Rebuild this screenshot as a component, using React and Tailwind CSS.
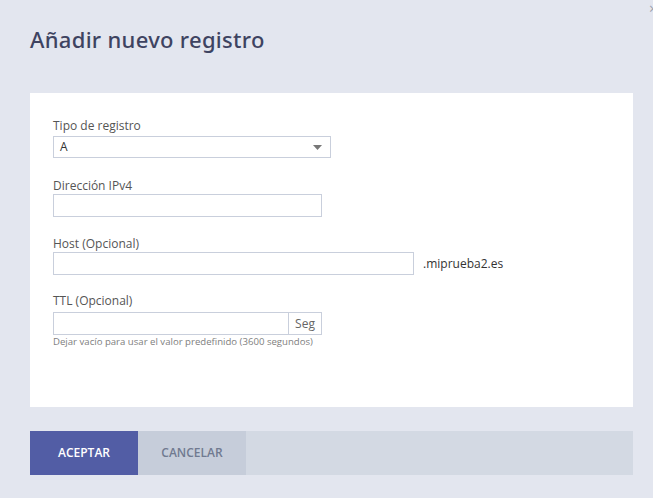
export default function App() {
  return (
    <div className="relative w-[653px] h-[498px] bg-[#e3e6ef] overflow-hidden" style={{ fontFamily: '"Open Sans", sans-serif' }}>
      <span className="absolute right-[-4px] top-[2px] text-[14px] text-[#9aa0ad] leading-none">×</span>
      <div className="pl-[30px] pt-[25px] h-[93px]">
        <h1 className="text-[22px] leading-[28px] text-[#3e4361] font-medium tracking-[0.3px]" style={{ fontFamily: '"Noto Sans", sans-serif' }}>Añadir nuevo registro</h1>
      </div>
      <div className="ml-[30px] w-[603px] h-[314px] bg-white pl-[23px] pt-[25px] text-[#555]">
        <div className="text-[12px] leading-[16px]">Tipo de registro</div>
        <div className="mt-[2px] w-[278px] h-[22px] border border-[#c9cfdc] flex items-center justify-between px-[6px] text-[12px] text-[#333]">
          <span>A</span>
          <svg width="9" height="5" viewBox="0 0 9 5" className="mr-[2px]"><path d="M0 0h9L4.5 5z" fill="#777" /></svg>
        </div>
        <div className="mt-[20px] text-[12px] leading-[16px]">Dirección IPv4</div>
        <div className="mt-0 w-[269px] h-[23px] border border-[#c9cfdc]" />
        <div className="mt-[19px] text-[12px] leading-[16px]">Host (Opcional)</div>
        <div className="mt-0 flex items-center">
          <div className="w-[361px] h-[23px] border border-[#c9cfdc]" />
          <span className="ml-[9px] text-[12px] text-[#333]">.miprueba2.es</span>
        </div>
        <div className="mt-[18px] text-[12px] leading-[16px]">TTL (Opcional)</div>
        <div className="mt-[3px] flex w-[269px] h-[23px]">
          <div className="flex-1 border border-[#c9cfdc]" />
          <div className="w-[33px] border border-l-0 border-[#c9cfdc] flex items-center justify-center text-[12px] text-[#666]">Seg</div>
        </div>
        <div className="mt-[1px] text-[9.6px] leading-[12px] text-[#808080]">Dejar vacío para usar el valor predefinido (3600 segundos)</div>
      </div>
      <div className="ml-[30px] mt-[24px] w-[603px] h-[44px] bg-[#d3d9e3] flex">
        <button className="w-[108px] h-full bg-[#525da5] text-white text-[12px] font-semibold">ACEPTAR</button>
        <button className="w-[108px] h-full bg-[#c6cdda] text-[#707a90] text-[12px] font-semibold">CANCELAR</button>
      </div>
    </div>
  );
}
